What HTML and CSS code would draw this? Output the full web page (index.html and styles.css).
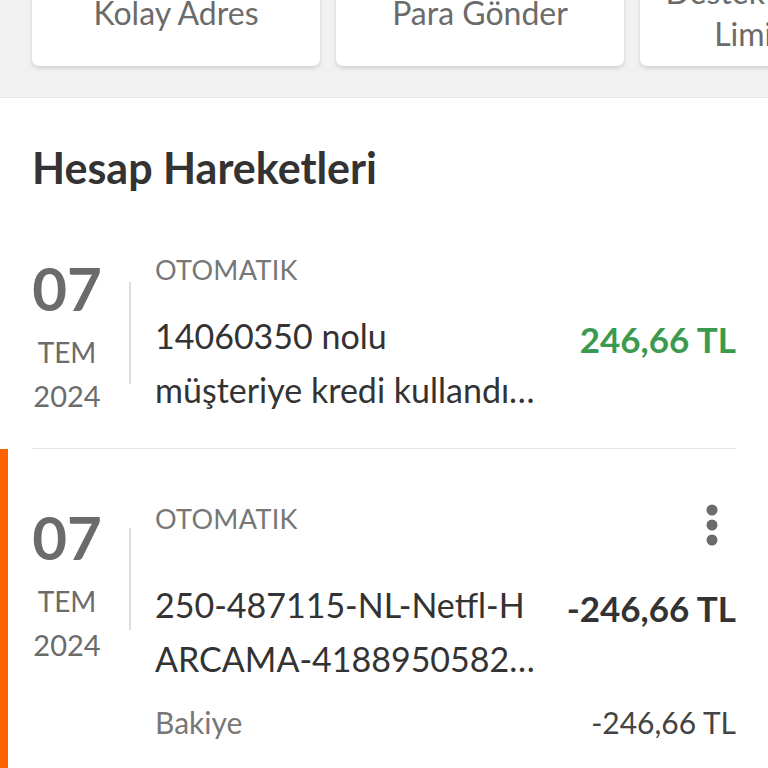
FILE: index.html
```html
<!DOCTYPE html>
<html lang="tr">

<head>
<meta charset="utf-8">
<title>Hesap Hareketleri</title>
<link rel="stylesheet" href="styles.css">
</head>

<body>
    <div class="shortcuts">
        <div class="shortcutCard"><span>Kolay Adres</span></div>
        <div class="shortcutCard"><span>Para Gönder</span></div>
        <div class="shortcutCard"><span>Destek Olduğum<br>Limitlerim</span></div>
    </div>

    <div class="movements">
        <h2 class="sectionTitle">Hesap Hareketleri</h2>

        <div class="tx">
            <div class="txInner">
                <div class="txDate">
                    <div class="day">07</div>
                    <div class="month">TEM</div>
                    <div class="year">2024</div>
                </div>
                <div class="txDivider"></div>
                <div class="txBody">
                    <div class="txTop">
                        <span class="txType">OTOMATIK</span>
                    </div>
                    <div class="txMain">
                        <div class="txDesc singleWrap">14060350 nolu<br>müşteriye kredi kullandırımı yapılmıştır</div>
                        <div class="txAmount plus">246,66 TL</div>
                    </div>
                </div>
            </div>
        </div>

        <div class="tx selected">
            <div class="txInner">
                <div class="txDate">
                    <div class="day">07</div>
                    <div class="month">TEM</div>
                    <div class="year">2024</div>
                </div>
                <div class="txDivider"></div>
                <div class="txBody">
                    <div class="txTop">
                        <span class="txType">OTOMATIK</span>
                        <button class="moreButton" aria-label="Diğer">
                            <svg width="14" height="44" viewBox="0 0 14 44">
                                <circle cx="7" cy="7" r="5.5" fill="#6b6b6b"/>
                                <circle cx="7" cy="22" r="5.5" fill="#6b6b6b"/>
                                <circle cx="7" cy="37" r="5.5" fill="#6b6b6b"/>
                            </svg>
                        </button>
                    </div>
                    <div class="txMain">
                        <div class="txDesc breakAll">250-487115-NL-Netfl-HARCAMA-4188950582-NETFLIX.COM</div>
                        <div class="txAmount">-246,66 TL</div>
                    </div>
                    <div class="txBalance">
                        <span class="balanceLabel">Bakiye</span>
                        <span class="balanceValue">-246,66 TL</span>
                    </div>
                </div>
            </div>
        </div>
    </div>
</body>
</html>
```

FILE: styles.css
```css
html, body {
	margin: 0;
	height: 100%;
	overflow: hidden;
}
body {
	font-family: Lato, "Noto Sans", sans-serif;
	background-color: #ffffff;
	color: #333333;
}

/* shortcut cards, scrolled half out of view */
.shortcuts {
	display: flex;
	gap: 16px;
	padding: 0 0 0 32px;
	height: 97px;
	background-color: #f1f1f1;
	border-bottom: 1px solid #e6e6e6;
	overflow: hidden;
}
.shortcutCard {
	flex: 0 0 288px;
	height: 116px;
	margin-top: -50px;
	padding-top: 10px;
	box-sizing: border-box;
	background-color: #ffffff;
	border-radius: 7px;
	box-shadow: 0 2px 4px rgba(0, 0, 0, 0.14);
	display: flex;
	align-items: center;
	justify-content: center;
	text-align: center;
	font-size: 32px;
	line-height: 42px;
	color: #6b6b6b;
	white-space: nowrap;
}

/* account movements */
.sectionTitle {
	margin: 0;
	padding: 46px 32px 0;
	font-size: 43px;
	line-height: 48px;
	font-weight: bold;
	color: #333333;
}
.tx {
	padding: 0 32px;
}
.tx.selected {
	box-shadow: inset 8px 0 0 #ff6200;
}
.txInner {
	display: flex;
	padding: 62px 0 26px;
	border-bottom: 1px solid #e6e6e6;
}
.selected .txInner {
	padding-top: 54px;
	border-bottom: none;
}
.txDate {
	width: 70px;
	text-align: center;
	color: #6b6b6b;
	padding-top: 4px;
}
.day {
	font-size: 60px;
	line-height: 60px;
	font-weight: bold;
}
.month {
	font-size: 28px;
	line-height: 36px;
	margin-top: 16px;
}
.year {
	font-size: 29px;
	line-height: 52px;
}
.txDivider {
	width: 2px;
	height: 102px;
	margin: 28px 24px 0 27px;
	background-color: #dddddd;
}
.selected .txDivider {
	margin-top: 25px;
}
.txBody {
	flex: 1;
	min-width: 0;
}
.txTop {
	display: flex;
	justify-content: space-between;
	align-items: flex-start;
}
.txType {
	font-size: 27px;
	line-height: 32px;
	color: #777777;
	letter-spacing: 0.3px;
}
.moreButton {
	border: none;
	background: none;
	padding: 0;
	margin: 0 17px 0 0;
	line-height: 0;
	cursor: pointer;
}
.txMain {
	display: flex;
	justify-content: space-between;
	align-items: flex-start;
	margin-top: 23px;
}
.selected .txMain {
	margin-top: 31px;
}
.txDesc {
	width: 384px;
	font-size: 34px;
	line-height: 54px;
	color: #333333;
	display: -webkit-box;
	-webkit-box-orient: vertical;
	-webkit-line-clamp: 2;
	overflow: hidden;
}
.singleWrap {
	display: block;
	white-space: nowrap;
	text-overflow: ellipsis;
}
.breakAll {
	word-break: break-all;
}
.txAmount {
	padding-top: 3px;
	font-size: 35px;
	line-height: 54px;
	font-weight: bold;
	color: #333333;
	white-space: nowrap;
}
.txAmount.plus {
	color: #3a9a50;
}
.txBalance {
	display: flex;
	justify-content: space-between;
	align-items: baseline;
	margin-top: 16px;
}
.balanceLabel {
	font-size: 30px;
	line-height: 40px;
	color: #777777;
}
.balanceValue {
	font-size: 30px;
	line-height: 40px;
	color: #444444;
}
```
